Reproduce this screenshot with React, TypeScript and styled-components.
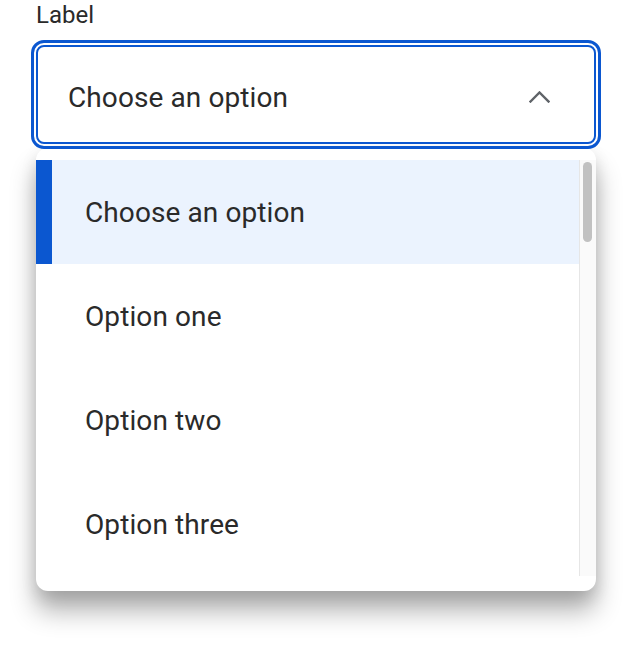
import React from "react";
import styled, { createGlobalStyle } from "styled-components";

const Global = createGlobalStyle`
  html, body { margin: 0; padding: 0; background: #ffffff; }
  body { font-family: Roboto, "Liberation Sans", Arial, sans-serif; }
  * { box-sizing: border-box; }
`;

const Page = styled.div`
  width: 632px;
  min-height: 652px;
  padding: 1px 36px 0 36px;
  display: flex;
  flex-direction: column;
  background: #ffffff;
`;

const Label = styled.label`
  font-size: 24px;
  line-height: 28px;
  color: #2a2a2a;
  margin-bottom: 16px;
`;

const SelectBox = styled.button`
  position: relative;
  z-index: 2;
  width: 560px;
  height: 99px;
  border: 2px solid #0b57d0;
  border-radius: 8px;
  outline: 3px solid #0b57d0;
  outline-offset: 2px;
  background: #ffffff;
  display: flex;
  align-items: center;
  justify-content: space-between;
  padding: 5px 44px 0 30px;
  font-family: inherit;
  font-size: 28px;
  letter-spacing: 0.1px;
  color: #2a2a2a;
  cursor: pointer;
`;

const Card = styled.div`
  margin-top: 4px;
  width: 560px;
  background: #ffffff;
  border-radius: 12px;
  padding: 12px 0 15px 0;
  box-shadow: 0 20px 26px rgba(0, 0, 0, 0.3), 0 6px 16px rgba(0, 0, 0, 0.12);
  display: flex;
  overflow: hidden;
`;

const List = styled.ul`
  list-style: none;
  margin: 0;
  padding: 0;
  flex: 1;
  display: flex;
  flex-direction: column;
`;

const Option = styled.li<{ $selected?: boolean }>`
  height: 104px;
  display: flex;
  align-items: center;
  padding-left: ${(p) => (p.$selected ? "33px" : "49px")};
  border-left: ${(p) => (p.$selected ? "16px solid #0b57d0" : "none")};
  background: ${(p) => (p.$selected ? "#ebf3fe" : "#ffffff")};
  font-size: 28px;
  letter-spacing: 0.1px;
  color: #2a2a2a;
`;

const Track = styled.div`
  width: 17px;
  background: #fafafa;
  border-left: 1px solid #e6e6e6;
  padding: 2px 4px 0 3px;
`;

const Thumb = styled.div`
  height: 80px;
  border-radius: 5px;
  background: #c1c1c1;
`;

const Chevron = () => (
  <svg width="21" height="12" viewBox="0 0 21 12" fill="none">
    <polyline
      points="1.5,10.5 10.5,1.5 19.5,10.5"
      stroke="#5f6368"
      strokeWidth="2.4"
      strokeLinecap="square"
      strokeLinejoin="miter"
    />
  </svg>
);

const options = ["Choose an option", "Option one", "Option two", "Option three"];

export default function App() {
  return (
    <>
      <Global />
      <Page>
        <Label>Label</Label>
        <SelectBox>
          <span>Choose an option</span>
          <Chevron />
        </SelectBox>
        <Card>
          <List>
            {options.map((o, i) => (
              <Option key={o} $selected={i === 0}>
                {o}
              </Option>
            ))}
          </List>
          <Track>
            <Thumb />
          </Track>
        </Card>
      </Page>
    </>
  );
}
